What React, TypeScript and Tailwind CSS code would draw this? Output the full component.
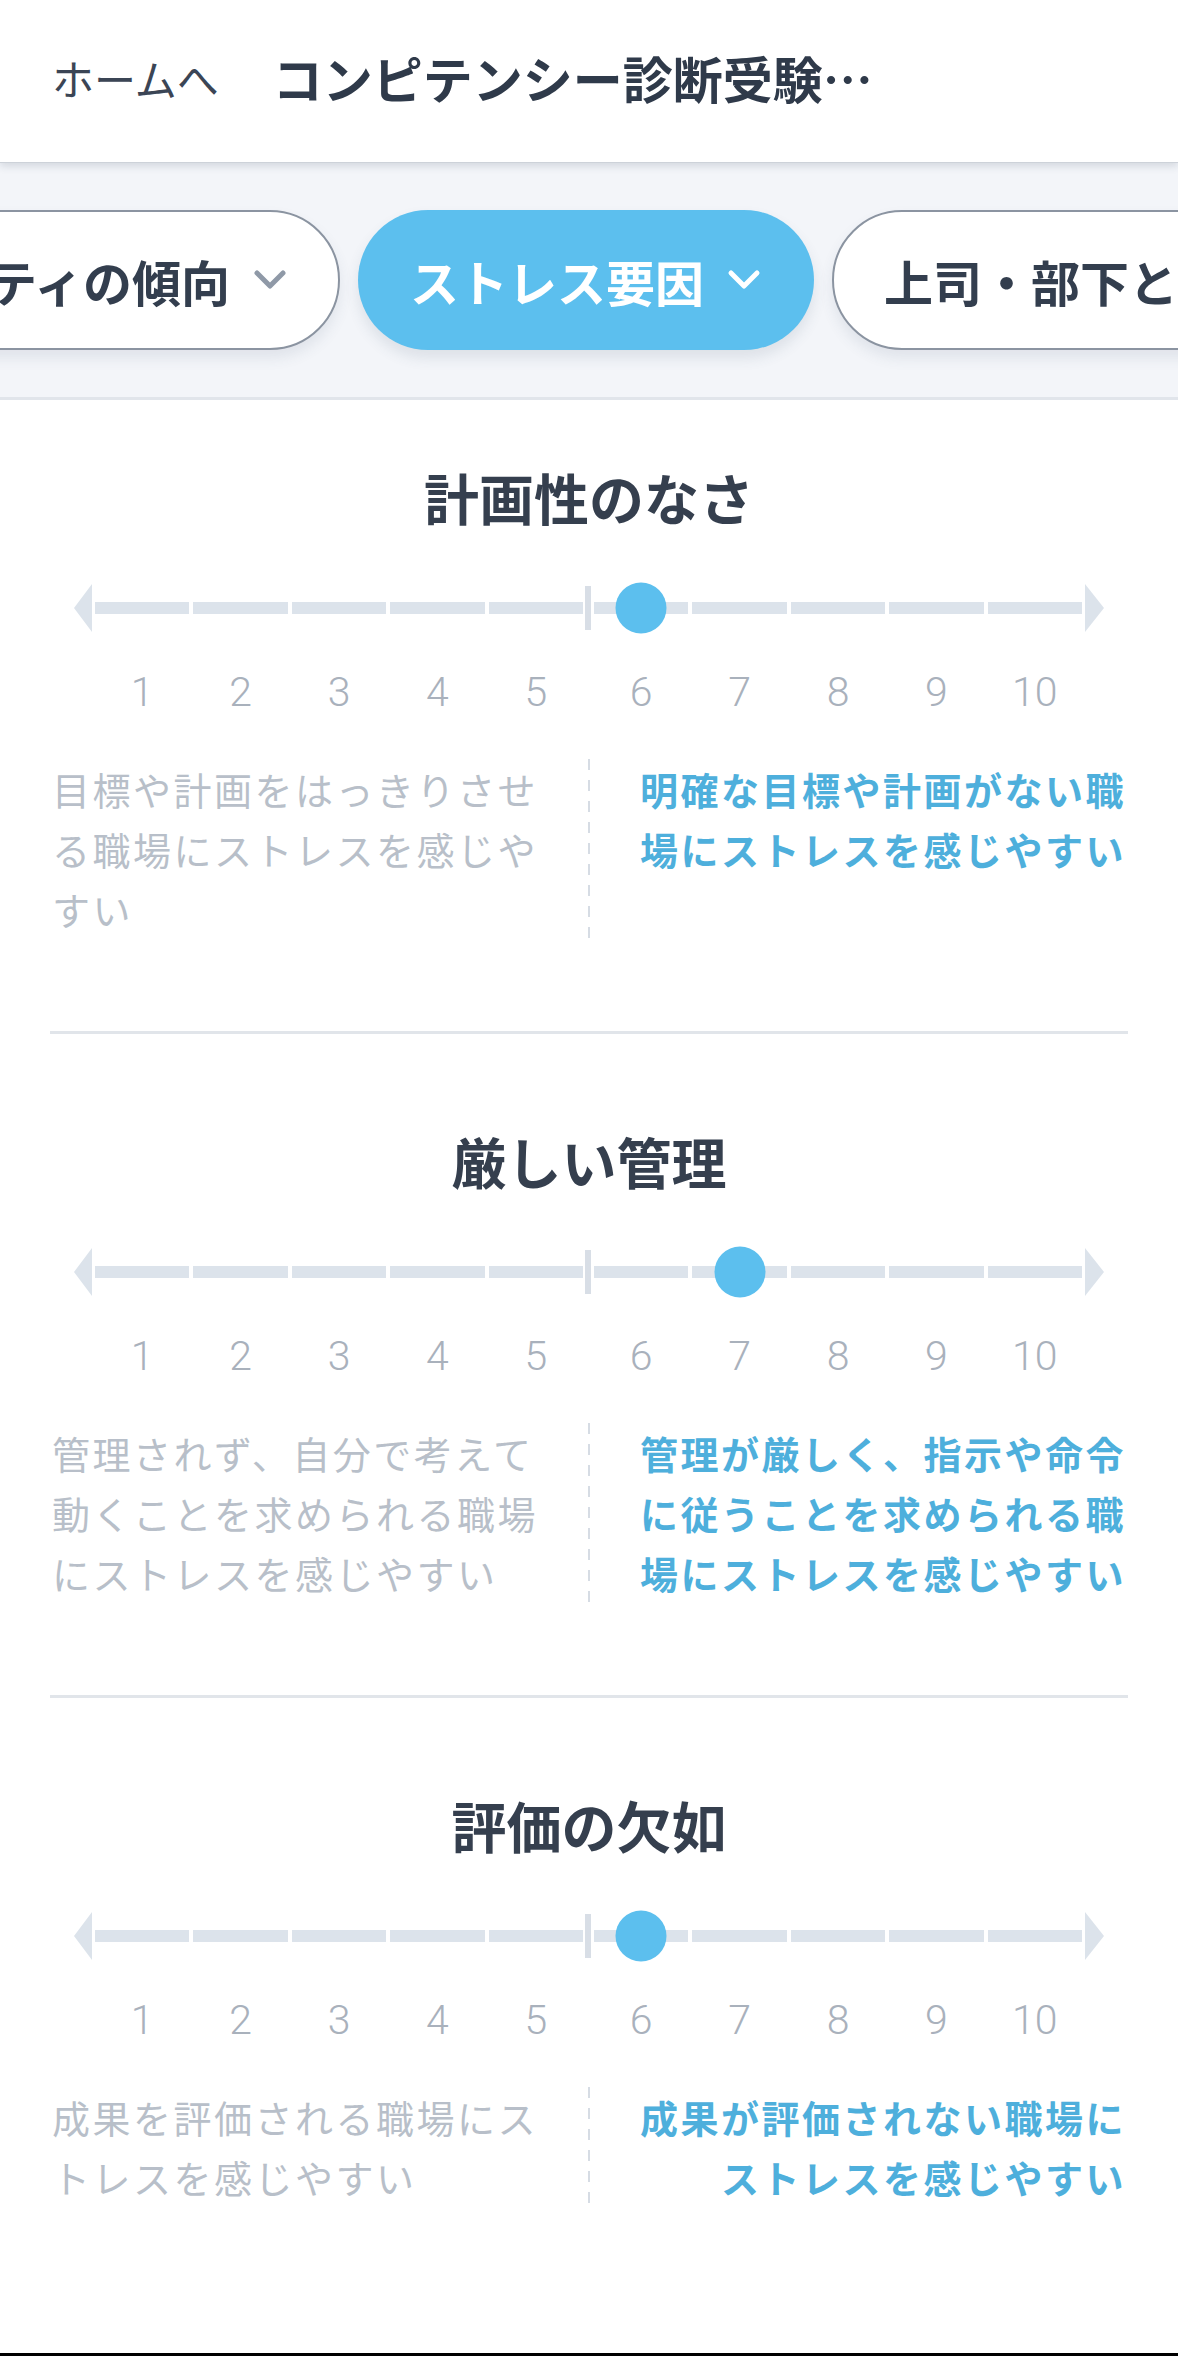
import React from "react";

type Section = {
  title: string;
  value: number;
  left: string[];
  right: string[];
};

const sections: Section[] = [
  {
    title: "計画性のなさ",
    value: 6,
    left: ["目標や計画をはっきりさせ", "る職場にストレスを感じや", "すい"],
    right: ["明確な目標や計画がない職", "場にストレスを感じやすい"],
  },
  {
    title: "厳しい管理",
    value: 7,
    left: ["管理されず、自分で考えて", "動くことを求められる職場", "にストレスを感じやすい"],
    right: ["管理が厳しく、指示や命令", "に従うことを求められる職", "場にストレスを感じやすい"],
  },
  {
    title: "評価の欠如",
    value: 6,
    left: ["成果を評価される職場にス", "トレスを感じやすい"],
    right: ["成果が評価されない職場に", "ストレスを感じやすい"],
  },
];

function Chevron({ color }: { color: string }) {
  return (
    <svg width="36" height="22" viewBox="0 0 36 22" fill="none" className="shrink-0">
      <polyline
        points="5,4 18,17 31,4"
        stroke={color}
        strokeWidth="5"
        strokeLinecap="round"
        strokeLinejoin="round"
      />
    </svg>
  );
}

function Chip({ label, active }: { label: string; active?: boolean }) {
  return (
    <div
      className={
        active
          ? "flex h-[140px] shrink-0 items-center gap-[22px] rounded-full bg-[#5cbfee] px-[52px] shadow-[0_8px_14px_rgba(60,80,110,0.12)]"
          : "flex h-[140px] shrink-0 items-center gap-[22px] rounded-full border-2 border-[#8b94a1] bg-white px-[50px] shadow-[0_8px_14px_rgba(60,80,110,0.10)]"
      }
    >
      <span
        className={
          active
            ? "whitespace-nowrap text-[49px] font-bold leading-none text-white"
            : "whitespace-nowrap text-[49px] font-bold leading-none text-[#333e4e]"
        }
      >
        {label}
      </span>
      <Chevron color={active ? "#ffffff" : "#8f99a7"} />
    </div>
  );
}

function ArrowLeft() {
  return (
    <svg width="18" height="48" viewBox="0 0 18 48" className="shrink-0">
      <polygon points="0,24 18,0 18,48" fill="#dce3eb" />
    </svg>
  );
}

function ArrowRight() {
  return (
    <svg width="19" height="48" viewBox="0 0 19 48" className="shrink-0">
      <polygon points="19,24 0,0 0,48" fill="#dce3eb" />
    </svg>
  );
}

function Scale({ value }: { value: number }) {
  const seg = (n: number) => (
    <div key={n} className="relative h-[12px] flex-1 bg-[#dce3eb]">
      {n === value && (
        <div className="absolute left-1/2 top-1/2 h-[51px] w-[51px] -translate-x-1/2 -translate-y-1/2 rounded-full bg-[#5cbfee]" />
      )}
    </div>
  );
  const num = (n: number) => (
    <div
      key={n}
      className="flex-1 text-center font-['Roboto',sans-serif] text-[41px] font-light leading-[48px] text-[#a9b1bc]"
    >
      {n}
    </div>
  );
  return (
    <div className="flex flex-col px-[74px]">
      <div className="mt-[46px] flex h-[52px] items-center">
        <ArrowLeft />
        <div className="ml-[3px] flex flex-1 gap-[4px]">{[1, 2, 3, 4, 5].map(seg)}</div>
        <div className="ml-[2px] mr-[3px] h-[44px] w-[6px] bg-[#d8dee6]" />
        <div className="flex flex-1 gap-[4px]">{[6, 7, 8, 9, 10].map(seg)}</div>
        <div className="w-[3px]" />
        <ArrowRight />
      </div>
      <div className="mt-[34px] flex">
        <div className="w-[21px] shrink-0" />
        <div className="flex flex-1 gap-[4px]">{[1, 2, 3, 4, 5].map(num)}</div>
        <div className="w-[11px] shrink-0" />
        <div className="flex flex-1 gap-[4px]">{[6, 7, 8, 9, 10].map(num)}</div>
        <div className="w-[22px] shrink-0" />
      </div>
    </div>
  );
}

function SectionBlock({ s, first }: { s: Section; first?: boolean }) {
  return (
    <div className={first ? "pt-[56px]" : "pt-[86px]"}>
      <h2 className="text-center text-[55px] font-bold leading-[80px] text-[#353f4e]">{s.title}</h2>
      <Scale value={s.value} />
      <div className="mt-[43px] flex justify-between px-[52px]">
        <div className="w-[488px] whitespace-nowrap text-[38px] leading-[60px] tracking-[2.5px] text-[#b8bfc9]">
          {s.left.map((l, i) => (
            <div key={i}>{l}</div>
          ))}
        </div>
        <div className="w-[2px] self-stretch bg-[repeating-linear-gradient(to_bottom,#d6dce4_0px,#d6dce4_11px,transparent_11px,transparent_21px)]" />
        <div className="w-[488px] whitespace-nowrap text-right text-[38px] font-bold leading-[60px] tracking-[2.5px] text-[#4eafdc]">
          {s.right.map((l, i) => (
            <div key={i}>{l}</div>
          ))}
        </div>
      </div>
    </div>
  );
}

export default function App() {
  return (
    <div className="flex h-[2356px] w-[1178px] flex-col overflow-hidden bg-white font-['Noto_Sans_CJK_JP',sans-serif]">
      <header className="relative z-10 flex h-[163px] shrink-0 items-center border-b border-[#cdd2d9] bg-white px-[52px] pb-[8px] shadow-[0_3px_8px_rgba(40,55,80,0.16)]">
        <span className="text-[42px] font-normal text-[#3b4555]">ホームへ</span>
        <span className="ml-[54px] text-[50px] font-bold text-[#2f3a4a]">コンピテンシー診断受験…</span>
      </header>

      <div className="flex h-[237px] shrink-0 items-center gap-[18px] overflow-hidden border-b-[3px] border-[#e1e5eb] bg-[#f3f5f9]">
        <div className="flex w-[340px] shrink-0 justify-end">
          <Chip label="パーソナリティの傾向" />
        </div>
        <Chip label="ストレス要因" active />
        <Chip label="上司・部下との関係" />
      </div>

      {sections.map((s, i) => (
        <React.Fragment key={s.title}>
          {i > 0 && <div className="mx-[50px] mt-[92px] h-[3px] shrink-0 bg-[#e1e5ea]" />}
          <SectionBlock s={s} first={i === 0} />
        </React.Fragment>
      ))}

      <div className="mt-auto h-[3px] shrink-0 bg-black" />
    </div>
  );
}
